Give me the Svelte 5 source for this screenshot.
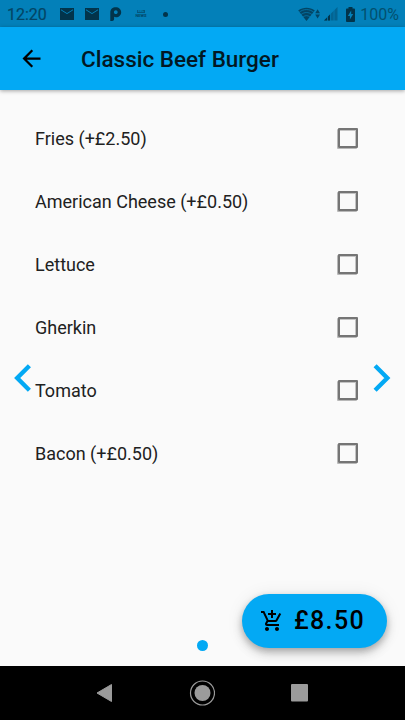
<script lang="ts">
    interface Extra {
        name: string;
        checked: boolean;
    }

    let extras: Extra[] = $state([
        { name: "Fries (+£2.50)", checked: false },
        { name: "American Cheese (+£0.50)", checked: false },
        { name: "Lettuce", checked: false },
        { name: "Gherkin", checked: false },
        { name: "Tomato", checked: false },
        { name: "Bacon (+£0.50)", checked: false },
    ]);
</script>

<div class="screen">
    <div class="status-bar">
        <span class="clock">12:20</span>
        <div class="notifications">
            {#each [0, 1] as _}
                <svg class="mail" width="14" height="12" viewBox="0 0 14 12">
                    <path class="dark" d="M0 0h14v12H0z" />
                    <path class="fold" d="M1 1.8l6 3.8 6-3.8" />
                </svg>
            {/each}
            <svg class="parking" width="12" height="14" viewBox="0 0 12 14">
                <path
                    class="dark"
                    fill-rule="evenodd"
                    d="M.3 14V5.4C.3 2.1 2.7.2 5.8.2c3.1 0 5.4 2.1 5.4 5s-2.2 5-5.2 5c-.8 0-1.4-.2-1.9-.5V12c0 1.2-.8 2-2 2zM5.8 3.3c-1.1 0-1.9.8-1.9 1.9s.8 1.9 1.9 1.9 1.9-.8 1.9-1.9-.8-1.9-1.9-1.9z"
                />
            </svg>
            <div class="news"><b>BBC</b><span>NEWS</span></div>
            <i class="more"></i>
        </div>
        <div class="system">
            <svg width="22" height="15" viewBox="0 0 22 15">
                <path class="soft" d="M.2 3.4C5-.2 12-.2 16.8 3.4L8.5 14z" />
                <path class="gap thin" d="M1.2 5.2c4.5-3.5 10.1-3.5 14.6 0M3 7.6c3.5-2.8 7.5-2.8 11 0M5 10c2.3-1.8 4.7-1.8 7 0" />
                <path class="soft" d="M17.2 6.2l2.4-4 2.4 4zM17.2 7.4H22l-2.4 4z" />
            </svg>
            <svg class="signal" width="14" height="14" viewBox="0 0 14 14">
                <path class="faint" d="M13.5 0v13.5H0z" />
                <path class="dark" d="M6 7.5v6H0z" />
                <path class="gap thin" d="M3.5 9v5M6.6 6v8M10 2v12" />
            </svg>
            <svg class="battery" width="9" height="15" viewBox="0 0 9 15">
                <path
                    class="dark"
                    fill-rule="evenodd"
                    d="M2.5 0h4v1.5H8c.5 0 1 .5 1 1V14c0 .5-.5 1-1 1H1c-.5 0-1-.5-1-1V2.5c0-.5.5-1 1-1h1.5zM5.2 3.5L1.8 9h2.1v3.5L7.2 7h-2z"
                />
            </svg>
            <span>100%</span>
        </div>
    </div>

    <header class="app-bar">
        <button class="back" aria-label="Back">
            <svg width="27" height="27" viewBox="0 0 24 24">
                <path d="M20 11H7.83l5.59-5.59L12 4l-8 8 8 8 1.41-1.41L7.83 13H20v-2z" />
            </svg>
        </button>
        <h1>Classic Beef Burger</h1>
    </header>

    <main>
        {#each extras as extra}
            <label class="row">
                <span>{extra.name}</span>
                <input type="checkbox" bind:checked={extra.checked} />
            </label>
        {/each}

        <button class="nav prev" aria-label="Previous">
            <svg width="18" height="28" viewBox="0 0 18 28">
                <path d="M15.4 1.8L3.2 14l12.2 12.2" />
            </svg>
        </button>
        <button class="nav next" aria-label="Next">
            <svg width="18" height="28" viewBox="0 0 18 28">
                <path d="M2.1 1.8L14.3 14 2.1 26.2" />
            </svg>
        </button>
        <i class="page-dot"></i>
        <button class="fab">
            <svg width="24" height="24" viewBox="0 0 24 24">
                <path
                    d="M11 9h2V6h3V4h-3V1h-2v3H8v2h3v3zm-4 9c-1.1 0-1.99.9-1.99 2S5.9 22 7 22s2-.9 2-2-.9-2-2-2zm10 0c-1.1 0-1.99.9-1.99 2s.89 2 1.99 2 2-.9 2-2-.9-2-2-2zm-9.83-3.25l.03-.12.9-1.63h7.45c.75 0 1.41-.41 1.75-1.03l3.86-7.01L19.42 4h-.01l-1.1 2-2.76 5H8.53l-.13-.27L6.16 6l-.95-2-.94-2H1v2h2l3.6 7.59-1.35 2.45c-.16.28-.25.61-.25.96 0 1.1.9 2 2 2h12v-2H7.42c-.13 0-.25-.11-.25-.25z"
                />
            </svg>
            <span>£8.50</span>
        </button>
    </main>

    <footer class="system-nav">
        <svg width="17" height="20" viewBox="0 0 17 20">
            <path class="triangle" d="M15.5 1.5v17L1 10z" />
        </svg>
        <svg width="26" height="26" viewBox="0 0 26 26">
            <circle class="ring" cx="13.5" cy="13" r="12" />
            <circle cx="13.5" cy="13" r="8" />
        </svg>
        <svg width="17" height="18" viewBox="0 0 17 18">
            <rect width="17" height="17.5" rx="1" />
        </svg>
    </footer>
</div>

<style>
    :global(body) {
        margin: 0;
    }

    .screen {
        display: flex;
        flex-direction: column;
        width: 405px;
        height: 720px;
        overflow: hidden;
        background: #fafafa;
        color: #212121;
        font-family: Roboto, "Liberation Sans", sans-serif;
    }

    svg {
        display: block;
        flex-shrink: 0;
    }

    button {
        border: 0;
        padding: 0;
        background: none;
        color: #000;
        font: inherit;
    }

    .status-bar {
        display: flex;
        align-items: center;
        box-sizing: border-box;
        height: 27px;
        padding: 1px 6px 0 7px;
        background: #0380b9;
        color: #02506f;
        font-size: 16px;
    }
    .clock {
        width: 53px;
        color: #024565;
        -webkit-text-stroke: 0.2px #024565;
    }
    .notifications {
        display: flex;
        align-items: center;
    }
    .mail {
        margin-right: 11px;
    }
    .parking {
        margin-right: 13px;
    }
    .news {
        display: flex;
        flex-direction: column;
        align-items: center;
        gap: 1px;
        width: 12px;
        font-size: 4px;
        font-weight: 700;
        line-height: 4px;
        color: #024565;
    }
    .news b {
        padding: 0 1px;
        font-size: 3px;
        line-height: 3px;
        background: #03577d;
        color: #0380b9;
    }
    .more {
        width: 5px;
        height: 5px;
        margin-left: 16px;
        border-radius: 50%;
        background: #02344b;
    }
    .system {
        display: flex;
        align-items: center;
        margin-left: auto;
    }
    .signal {
        margin-left: 4px;
    }
    .battery {
        margin: 0 5px 0 8px;
    }
    .dark {
        fill: #02344b;
    }
    .soft {
        fill: #024565;
    }
    .faint {
        fill: #036492;
    }
    .fold,
    .gap {
        fill: none;
        stroke: #0380b9;
        stroke-width: 1;
    }
    .thin {
        stroke-width: 0.7;
    }

    .app-bar {
        display: flex;
        align-items: center;
        z-index: 1;
        height: 63px;
        background: #03a9f4;
        box-shadow: 0 1px 4px rgba(0, 0, 0, 0.35);
    }
    .back {
        margin-left: 18px;
    }
    h1 {
        margin: 0 0 0 36px;
        font-size: 22.5px;
        font-weight: 500;
        color: #021823;
    }

    main {
        position: relative;
        flex: 1;
        padding: 17px 35px 0;
    }
    .row {
        display: flex;
        align-items: center;
        justify-content: space-between;
        height: 63px;
        padding-right: 12px;
        font-size: 18px;
    }
    input {
        appearance: none;
        box-sizing: border-box;
        width: 20px;
        height: 20px;
        margin: 0 0 1px;
        border: 2px solid #757575;
        border-radius: 1px;
        box-shadow:
            -1px 1px 0 #b8b8b8,
            inset -1px 1px 0 #c4c4c4;
    }
    input:checked {
        border-color: #03a9f4;
        background: #03a9f4;
    }

    .nav {
        position: absolute;
        top: 274px;
    }
    .prev {
        left: 14px;
    }
    .next {
        right: 14px;
    }
    .nav path {
        fill: none;
        stroke: #03a9f4;
        stroke-width: 4.4;
    }
    .page-dot {
        position: absolute;
        bottom: 15px;
        left: 197px;
        width: 11px;
        height: 11px;
        border-radius: 50%;
        background: #03a9f4;
    }
    .fab {
        position: absolute;
        right: 18px;
        bottom: 18px;
        display: flex;
        align-items: center;
        gap: 10px;
        box-sizing: border-box;
        width: 145px;
        height: 54px;
        padding: 0 0 1px 18px;
        border-radius: 27px;
        background: #03a9f4;
        box-shadow:
            0 3px 6px rgba(0, 0, 0, 0.2),
            0 6px 11px rgba(0, 0, 0, 0.14),
            0 1px 18px rgba(0, 0, 0, 0.08);
        font-size: 25px;
        font-weight: 500;
        letter-spacing: 1.35px;
    }

    .system-nav {
        display: flex;
        align-items: center;
        justify-content: space-between;
        box-sizing: border-box;
        height: 54px;
        padding: 0 97px 0 96px;
        background: #000;
    }
    .system-nav svg {
        fill: #9b9b9b;
        stroke: #9b9b9b;
        stroke-width: 0;
    }
    .system-nav .triangle {
        stroke-width: 1;
        stroke-linejoin: round;
    }
    .system-nav .ring {
        fill: none;
        stroke-width: 1.2;
    }
</style>
